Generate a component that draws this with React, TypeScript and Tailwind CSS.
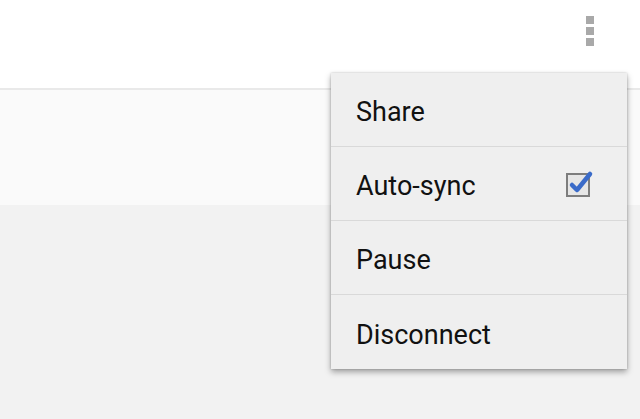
const items = ['Share', 'Auto-sync', 'Pause', 'Disconnect'];

function CheckedBox() {
  return (
    <svg width="30" height="30" viewBox="0 0 30 30" className="block">
      <rect x="2" y="6" width="22" height="22" fill="#e6e6e6" stroke="#7d7d7d" strokeWidth="2" />
      <path d="M7 17 L12 22 L25 6" fill="none" stroke="#3a6bc9" strokeWidth="4.5" strokeLinecap="round" strokeLinejoin="round" />
    </svg>
  );
}

export default function App() {
  return (
    <div className="relative h-[419px] w-[640px] overflow-hidden bg-[#f2f2f2] font-['Roboto',sans-serif]">
      {/* Action bar */}
      <div className="flex h-[90px] items-start justify-end border-b-2 border-[#e9e9e9] bg-white pr-[46px] pt-[16px]">
        <div className="flex flex-col gap-[3px]">
          <span className="h-[8px] w-[8px] bg-[#a9a9a9]" />
          <span className="h-[8px] w-[8px] bg-[#a9a9a9]" />
          <span className="h-[8px] w-[8px] bg-[#a9a9a9]" />
        </div>
      </div>
      <div className="h-[115px] bg-[#fafafa]" />

      {/* Overflow menu */}
      <div className="absolute left-[331px] top-[73px] w-[296px] bg-[#efefef] shadow-[0_3px_6px_rgba(0,0,0,0.35),0_0_2px_rgba(0,0,0,0.2)]">
        {items.map((label, i) => (
          <div
            key={label}
            className={`flex h-[74px] items-center justify-between pl-[25px] pr-[34px] ${i < items.length - 1 ? 'border-b border-[#d9d9d9]' : 'h-[73px]'}`}
          >
            <span className="pt-[6px] text-[27px] leading-none text-[#111]">{label}</span>
            {label === 'Auto-sync' && (
              <div className="-mr-[2px] -mt-[2px]">
                <CheckedBox />
              </div>
            )}
          </div>
        ))}
      </div>
    </div>
  );
}
